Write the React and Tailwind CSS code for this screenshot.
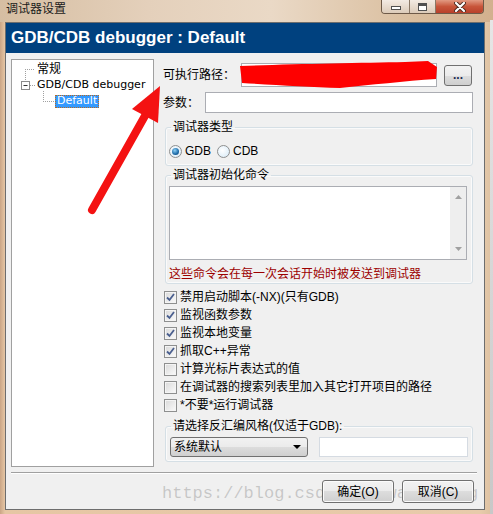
import React from "react";

const cjk = "font-['Liberation_Sans','Noto_Sans_CJK_SC',sans-serif]";

function Checkbox({ checked, label }) {
  return (
    <div className="flex h-[18px] items-center">
      <span className="ml-[1px] flex h-[13px] w-[13px] items-center justify-center border border-[#8e8f8f] bg-[linear-gradient(135deg,#d9d9d9,#fbfbfb)] shadow-[inset_0_0_0_1px_#f4f4f4]">
        {checked ? (
          <svg width="9" height="9" viewBox="0 0 9 9">
            <path d="M1 4.5 L3.5 7 L8 1" fill="none" stroke="#4a5f8f" strokeWidth="1.8" />
          </svg>
        ) : null}
      </span>
      <span className="ml-[3px]">{label}</span>
    </div>
  );
}

function Radio({ checked, label }) {
  return (
    <div className="flex items-center">
      <span className="flex h-[13px] w-[13px] items-center justify-center rounded-full border border-[#8e8f8f] bg-[radial-gradient(circle_at_40%_40%,#ffffff,#d4e8f6)]">
        {checked ? (
          <span className="h-[7px] w-[7px] rounded-full bg-[radial-gradient(circle_at_40%_35%,#8ed0f5,#1b6aa8_60%,#0e3e6a)]" />
        ) : null}
      </span>
      <span className="ml-[3px]">{label}</span>
    </div>
  );
}

function GroupBox({ title, className, children }) {
  return (
    <fieldset className={`ml-[2px] w-[308px] rounded-[3px] border border-[#d5dfe5] shadow-[inset_0_0_0_1px_#fafafa] ${className}`}>
      <legend className="ml-[5px] px-[2px] leading-[16px]">{title}</legend>
      {children}
    </fieldset>
  );
}

function WinButton({ children }) {
  return (
    <button className="h-[23px] w-[72px] rounded-[3px] border border-[#707070] bg-[linear-gradient(#f2f2f2_0%,#ebebeb_50%,#dddddd_50%,#cfcfcf_100%)] text-[12px] shadow-[inset_0_0_0_1px_#fbfbfb]">
      {children}
    </button>
  );
}

export default function App() {
  const checks = [
    ["禁用启动脚本(-NX)(只有GDB)", true],
    ["监视函数参数", true],
    ["监视本地变量", true],
    ["抓取C++异常", true],
    ["计算光标片表达式的值", false],
    ["在调试器的搜索列表里加入其它打开项目的路径", false],
    ["*不要*运行调试器", false],
  ];

  return (
    <div className={`relative h-[514px] w-[493px] overflow-hidden bg-[linear-gradient(90deg,#caa585_0px,#e6c6a4_5px,#e8cbab_480px,#dcc0a0_100%)] text-[12px] leading-[16px] text-black ${cjk}`}>
      {/* title bar */}
      <div className="flex h-[22px] items-start justify-between bg-[linear-gradient(90deg,#d6bea2,#e4d0bb_30%,#ead9c6_55%,#d9bd9d_85%,#d2b08e)]">
        <span className="ml-[6px] mt-[1px] text-[12px] leading-[16px] text-[#1b1b1b]">调试器设置</span>
        <div className="mr-[9px] flex h-[14px] overflow-hidden rounded-b-[4px] border border-t-0 border-[#6e5a48]">
          <div className="flex w-[28px] items-center justify-center border-r border-[#8a7866] bg-[linear-gradient(#f3ebe3,#dccbb9)]">
            <span className="mt-[3px] h-[4px] w-[10px] border border-[#505050] bg-white" />
          </div>
          <div className="flex w-[26px] items-center justify-center border-r border-[#8a7866] bg-[linear-gradient(#f3ebe3,#dccbb9)]">
            <span className="h-[8px] w-[9px] border border-[#505050] border-t-[3px] bg-white" />
          </div>
          <div className="flex w-[47px] items-center justify-center bg-[linear-gradient(#e29a82,#c8553a_50%,#b8402a)]">
            <svg width="12" height="10" viewBox="0 0 12 10">
              <path d="M2 1 L10 9 M10 1 L2 9" stroke="#4a2a20" strokeWidth="4" strokeLinecap="round" />
              <path d="M2 1 L10 9 M10 1 L2 9" stroke="#ffffff" strokeWidth="2.2" strokeLinecap="round" />
            </svg>
          </div>
        </div>
      </div>

      {/* client */}
      <div className="ml-[5px] flex h-[488px] w-[480px] flex-col border border-[#6d6d6d] bg-[#f0f0f0]">
        <div className="flex h-[30px] items-center bg-[#00417f] pl-[5px] font-['Liberation_Sans',sans-serif] text-[17px] font-bold text-white">
          GDB/CDB debugger : Default
        </div>

        <div className="flex pl-[5px] pt-[6px]">
          {/* tree */}
          <div className="relative h-[408px] w-[143px] border border-[#a0a0a0] bg-white pt-[1px] font-['DejaVu_Sans','Noto_Sans_CJK_SC',sans-serif] text-[11px]">
            <svg className="absolute left-0 top-0" width="60" height="50">
              <g stroke="#a0a0a0" strokeDasharray="1 1" fill="none">
                <path d="M13.5 9 V21 M13 9.5 H23 M18 25.5 H24 M31.5 31 V41 M31 41.5 H42" />
              </g>
              <rect x="9.5" y="21.5" width="8" height="8" fill="#fff" stroke="#8c8c8c" />
              <path d="M11.5 25.5 H15.5" stroke="#333" />
            </svg>
            <div className="flex h-[16px] items-center pl-[25px] text-[12px]">常规</div>
            <div className="flex h-[16px] items-center pl-[25px]">GDB/CDB debugger</div>
            <div className="flex h-[16px] items-center pl-[43px]">
              <span className="flex h-[13px] items-center border border-dotted border-[#b86a20] bg-[#3399ff] px-[1px] text-white">Default</span>
            </div>
          </div>

          {/* right panel */}
          <div className="ml-[9px] flex w-[310px] flex-col">
            <div className="mt-[4px] flex h-[24px] items-center">
              <span className="w-[78px]">可执行路径：</span>
              <div className="h-[24px] w-[196px] border border-[#abadb3] bg-white" />
              <button className="ml-[7px] h-[21px] w-[28px] rounded-[3px] border border-[#707070] bg-[linear-gradient(#f2f2f2_0%,#ebebeb_50%,#dddddd_50%,#cfcfcf_100%)] font-bold leading-[14px] text-[#1a2a50]">
                ...
              </button>
            </div>
            <div className="mt-[5px] flex h-[21px] items-center">
              <span className="w-[42px]">参数：</span>
              <div className="h-[21px] w-[268px] border border-[#abadb3] bg-white" />
            </div>

            <GroupBox title="调试器类型" className="mt-[6px]">
              <div className="mb-[7px] mt-[9px] flex h-[14px] items-center pl-[3px]">
                <Radio checked label="GDB" />
                <div className="ml-[6px]">
                  <Radio label="CDB" />
                </div>
              </div>
            </GroupBox>

            <GroupBox title="调试器初始化命令" className="mt-[1px]">
              <div className="ml-[3px] mt-[3px] flex h-[74px] w-[298px] border border-[#abadb3] bg-white">
                <div className="flex-1" />
                <div className="flex w-[16px] flex-col items-center justify-between bg-[#eeeeee] py-[8px]">
                  <svg width="7" height="4" viewBox="0 0 7 4">
                    <path d="M0 4 L3.5 0 L7 4 Z" fill="#a0a0a0" />
                  </svg>
                  <svg width="7" height="4" viewBox="0 0 7 4">
                    <path d="M0 0 L3.5 4 L7 0 Z" fill="#a0a0a0" />
                  </svg>
                </div>
              </div>
              <div className="mb-[1px] mt-[6px] h-[16px] pl-[3px] text-[#9c0000]">这些命令会在每一次会话开始时被发送到调试器</div>
            </GroupBox>

            <div className="mt-[4px] flex flex-col">
              {checks.map(([label, checked]) => (
                <Checkbox key={label} label={label} checked={checked} />
              ))}
            </div>

            <GroupBox title="请选择反汇编风格(仅适于GDB):" className="mt-[4px]">
              <div className="mb-[4px] mt-[3px] flex pl-[4px]">
                <div className="flex h-[20px] w-[138px] items-center justify-between rounded-[3px] border border-[#707070] bg-[linear-gradient(#f2f2f2_0%,#ebebeb_50%,#dddddd_50%,#cfcfcf_100%)] pl-[3px] pr-[6px]">
                  <span>系统默认</span>
                  <svg width="8" height="4" viewBox="0 0 8 4">
                    <path d="M0 0 L4 4 L8 0 Z" fill="#000" />
                  </svg>
                </div>
                <div className="ml-[11px] h-[20px] w-[149px] border border-[#d5dbe2] bg-white" />
              </div>
            </GroupBox>
          </div>
        </div>

        <div className="ml-[5px] mt-[5px] h-[2px] w-[466px] border-t border-b border-t-[#a0a0a0] border-b-white" />

        <div className="relative z-10 mt-[6px] flex justify-end gap-[8px] pr-[10px]">
          <WinButton>确定(O)</WinButton>
          <WinButton>取消(C)</WinButton>
        </div>
      </div>

      {/* watermark, sits behind the dialog buttons */}
      <div className="pointer-events-none absolute left-[162px] top-[484px] font-['Liberation_Mono',monospace] text-[17px] leading-[20px] text-[rgba(120,120,120,0.35)]">
        https://blog.csdn.net/wangjiang
      </div>

      {/* right edge of the window behind */}
      <div className="absolute right-0 top-[20px] h-[494px] w-[3px] bg-[linear-gradient(#e6e6e6,#c8c8c8)]" />

      {/* red annotations */}
      <svg className="pointer-events-none absolute left-0 top-0" width="493" height="514">
        <path
          d="M240 66 C290 64 360 63 405 62 L428 61 L437 67 L436 79 C405 81 370 85 340 88 C310 87 275 85 242 83 Z"
          fill="#fe0000"
        />
        <line x1="92" y1="210" x2="146" y2="114" stroke="#f41212" strokeWidth="8" strokeLinecap="round" />
        <polygon points="160,86 132,109 158,123" fill="#f41212" />
      </svg>
    </div>
  );
}
